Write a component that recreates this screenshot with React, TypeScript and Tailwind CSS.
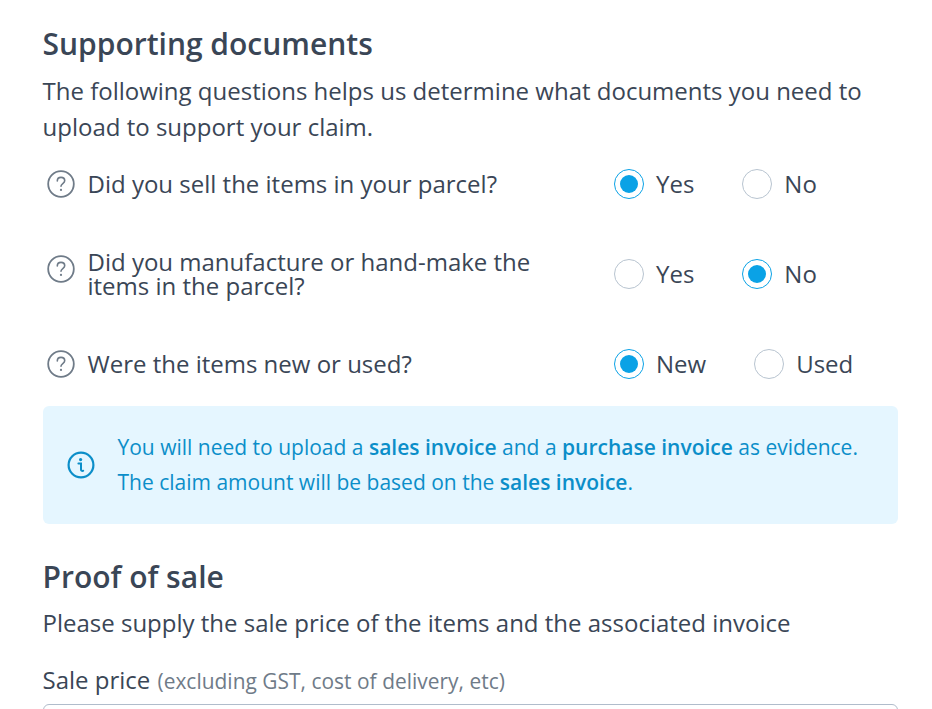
import React from 'react';

const ink = 'text-[#3a4656]';

const HelpIcon = ({ className = '' }: { className?: string }) => (
  <svg width="28" height="28" viewBox="0 0 28 28" fill="none" className={`shrink-0 ${className}`}>
    <circle cx="14" cy="14" r="12.8" stroke="#6f7b88" strokeWidth="1.8" />
    <path d="M10.3 11c0-2.2 1.6-3.6 3.7-3.6s3.7 1.4 3.7 3.3c0 2.8-3.7 3-3.7 5.6" stroke="#6f7b88" strokeWidth="1.6" strokeLinecap="round" />
    <circle cx="14" cy="19.9" r="1.1" fill="#6f7b88" />
  </svg>
);

const InfoIcon = () => (
  <svg width="28" height="28" viewBox="0 0 28 28" fill="none" className="shrink-0">
    <circle cx="14" cy="14" r="12.4" stroke="#0b8ec9" strokeWidth="2.2" />
    <circle cx="13.6" cy="8.6" r="1.6" fill="#0b8ec9" />
    <path d="M11.4 12.6h2.6v6c0 1 .7 1.5 2.2 1.2" stroke="#0b8ec9" strokeWidth="2" strokeLinecap="round" />
  </svg>
);

const Radio = ({ label, checked }: { label: string; checked?: boolean }) => (
  <div className="flex items-center gap-[12px]">
    <span
      className={`flex h-[30px] w-[30px] items-center justify-center rounded-full border ${
        checked ? 'border-[#0aa2e6]' : 'border-[#b8c4d0]'
      }`}
    >
      {checked && <span className="h-[18px] w-[18px] rounded-full bg-[#0aa2e6]" />}
    </span>
    <span className={`text-[24px] ${ink}`}>{label}</span>
  </div>
);

const Question = ({
  text,
  options,
  rowClass,
  iconClass,
}: {
  text: React.ReactNode;
  options: { label: string; checked?: boolean }[];
  rowClass: string;
  iconClass?: string;
}) => (
  <div className={`flex items-center ${rowClass}`}>
    <div className="flex w-[571px] items-center gap-[13px] pl-[4px]">
      <HelpIcon className={iconClass} />
      <div className={`-ml-[0.5px] max-w-[470px] text-[24px] leading-[24px] ${ink}`}>{text}</div>
    </div>
    <div className="flex items-center gap-[48px]">
      {options.map((o) => (
        <Radio key={o.label} label={o.label} checked={o.checked} />
      ))}
    </div>
  </div>
);

export default function App() {
  return (
    <div className="h-[709px] w-[932px] overflow-hidden bg-white pl-[43px] pr-[34px] pt-[26px] font-['Open_Sans',sans-serif]">
      <h2 className={`-ml-[0.5px] text-[30px] font-semibold leading-[36px] ${ink}`}>Supporting documents</h2>
      <p className={`-ml-[0.5px] mt-[11px] text-[24px] leading-[36px] ${ink}`}>
        The following questions helps us determine what documents you need to upload to support your claim.
      </p>

      <div className="mt-[9px]">
        <Question
          text="Did you sell the items in your parcel?"
          rowClass="h-[60px]"
          options={[{ label: 'Yes', checked: true }, { label: 'No' }]}
        />
        <Question
          text="Did you manufacture or hand-make the items in the parcel?"
          rowClass="mt-[30px] h-[60px]"
          iconClass="mb-[11px]"
          options={[{ label: 'Yes' }, { label: 'No', checked: true }]}
        />
        <Question
          text="Were the items new or used?"
          rowClass="mt-[30px] h-[60px]"
          options={[{ label: 'New', checked: true }, { label: 'Used' }]}
        />
      </div>

      <div className="mt-[12px] flex h-[118px] items-center gap-[23px] rounded-[6px] bg-[#e5f6ff] pl-[24px] text-[#0b8ec9]">
        <InfoIcon />
        <div className="-ml-[0.5px] text-[21px] leading-[35px]">
          <div>
            You will need to upload a <b className="font-semibold">sales invoice</b> and a{' '}
            <b className="font-semibold">purchase invoice</b> as evidence.
          </div>
          <div>
            The claim amount will be based on the <b className="font-semibold">sales invoice</b>.
          </div>
        </div>
      </div>

      <h2 className={`-ml-[0.5px] mt-[35px] text-[30px] font-semibold leading-[36px] ${ink}`}>Proof of sale</h2>
      <p className={`-ml-[0.5px] mt-[10px] text-[24px] leading-[36px] ${ink}`}>
        Please supply the sale price of the items and the associated invoice
      </p>
      <div className="-ml-[0.5px] mt-[21px] leading-[36px]">
        <span className={`text-[24px] ${ink}`}>Sale price</span>{' '}
        <span className="ml-[3px] text-[20.9px] tracking-[0.03px] text-[#6f7b88]">(excluding GST, cost of delivery, etc)</span>
      </div>
      <div className="mt-[3px] h-[40px] rounded-[6px] border border-[#b0bccb]" />
    </div>
  );
}
